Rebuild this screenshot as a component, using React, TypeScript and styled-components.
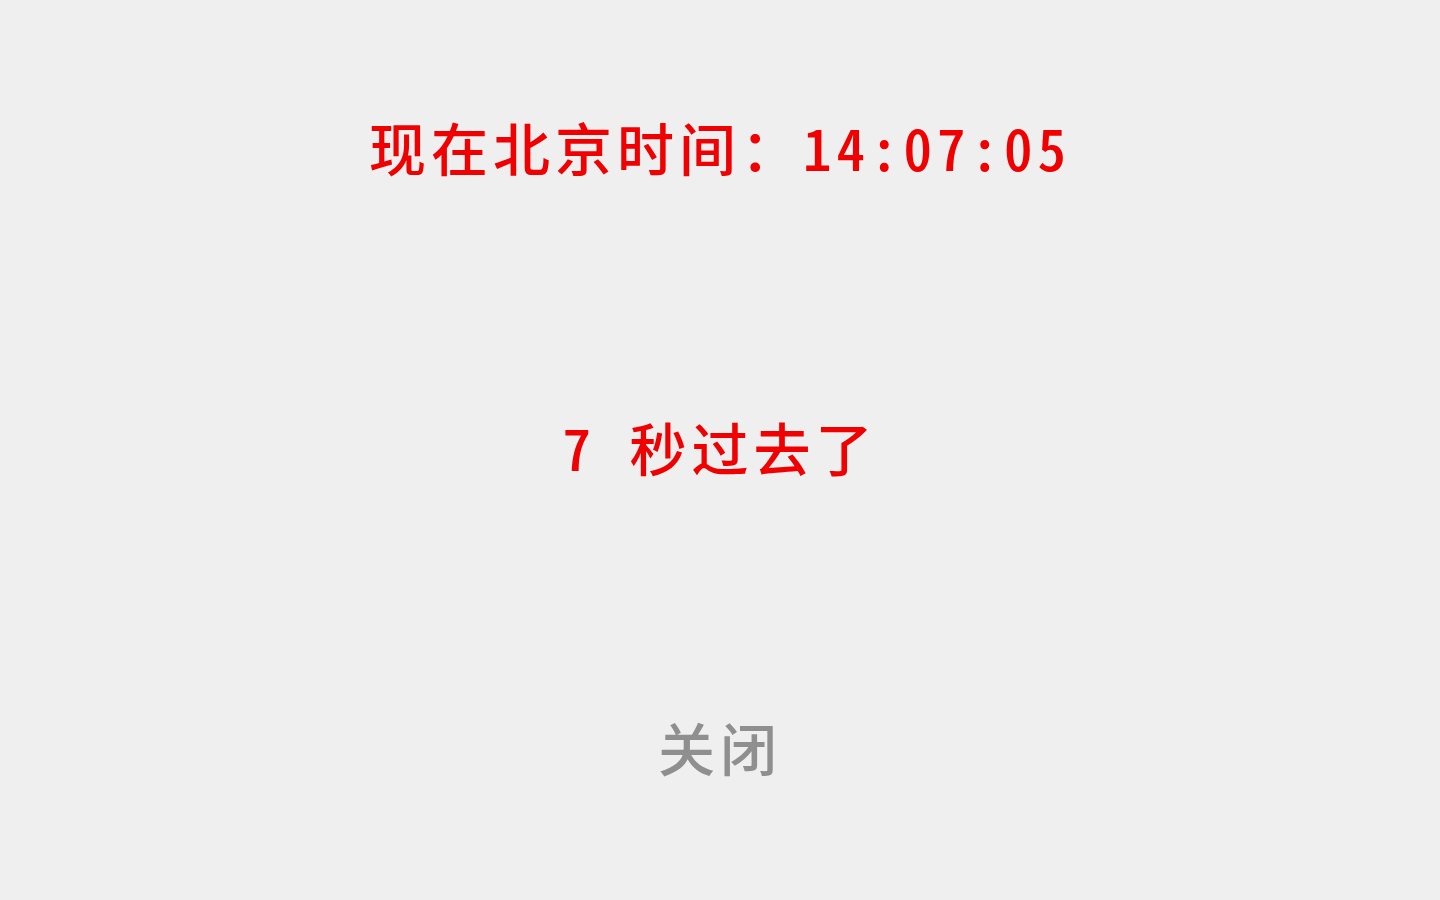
import React from 'react';
import styled, { createGlobalStyle } from 'styled-components';

const GlobalStyle = createGlobalStyle`
  html, body {
    margin: 0;
    padding: 0;
    background: #efefef;
  }
  body {
    font-family: "Noto Sans CJK SC", "Noto Sans", sans-serif;
  }
`;

const Page = styled.div`
  height: 900px;
  display: flex;
  flex-direction: column;
  align-items: center;
  padding-top: 116px;
  gap: 240px;
  box-sizing: border-box;
`;

const Line = styled.div`
  height: 60px;
  display: flex;
  align-items: center;
  font-size: 57px;
  font-weight: 500;
  letter-spacing: 5px;
  line-height: 60px;
  font-feature-settings: "hwid";
  color: #f00000;
  white-space: pre;
`;

const CloseButton = styled.button`
  height: 60px;
  border: none;
  background: none;
  padding: 0;
  font-family: inherit;
  font-size: 57px;
  font-weight: 500;
  letter-spacing: 5px;
  line-height: 60px;
  color: #8f8f8f;
  cursor: pointer;
`;

export default function App() {
  const time = '14:07:05';
  const seconds = 7;
  return (
    <>
      <GlobalStyle />
      <Page>
        <Line>现在北京时间：{time}</Line>
        <Line>{seconds} 秒过去了</Line>
        <CloseButton>关闭</CloseButton>
      </Page>
    </>
  );
}
